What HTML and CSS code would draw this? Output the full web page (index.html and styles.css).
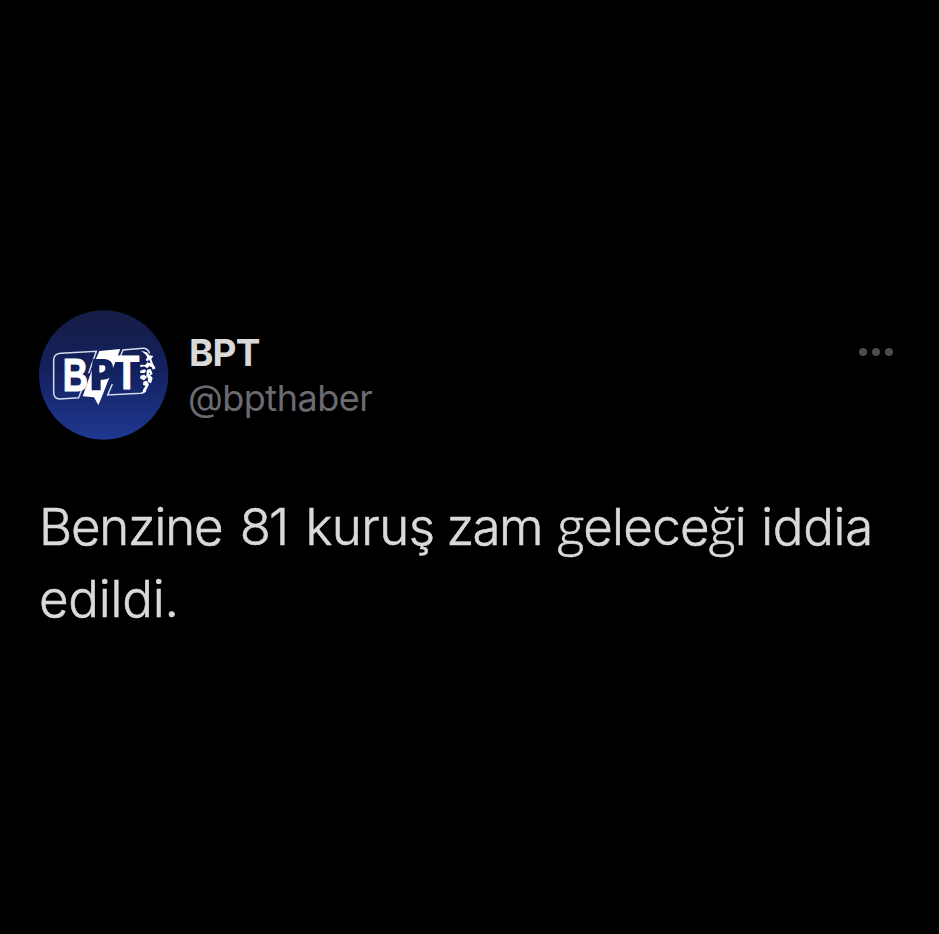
FILE: index.html
```html
<!DOCTYPE html>
<html lang="tr">
<head>
<meta charset="utf-8">
<title>BPT</title>
<link rel="stylesheet" href="styles.css">
</head>
<body>
<article class="post">
  <header class="head">
    <svg class="avatar" viewBox="0 0 420 420" aria-hidden="true">
      <defs><linearGradient id="sky" x1="0" y1="0" x2="0" y2="1"><stop offset="0" stop-color="#171d45"/><stop offset=".45" stop-color="#12205e"/><stop offset="1" stop-color="#1f3890"/></linearGradient></defs>
      <circle cx="209" cy="210" r="194" fill="url(#sky)"/>
      <g fill="none" stroke="#d5daec" stroke-width="4.5">
        <path d="M164 205L187 139L80 145Q59 147 59 166V262Q59 282 78 282L134 278L144 252"/>
        <path d="M257 160L267 135L327 130Q340 129 347 145M235 237L221 270L320 265Q332 264 336 256"/>
      </g>
      <path fill="#fff" d="M196 138L259 132L205 272L193 300L180 277L146 274L184 166Z"/>
      <path fill="#12215f" d="M176 162H211Q237 163 237 191Q236 223 207 224H200V256H173V200Z"/>
      <path fill="#fff" d="M196 181H208Q217 183 213 195Q209 203 196 203Z"/>
      <g class="mark"><text class="b" x="86" y="258" textLength="76" lengthAdjust="spacingAndGlyphs">B</text><text class="t" x="241" y="251" textLength="75" lengthAdjust="spacingAndGlyphs">T</text></g>
      <path fill="#fff" d="M321 137L338 142L346 151L358 153L352 162L357 176L365 190L356 194L354 187L346 184L340 190L330 184L319 187L319 179L333 180L341 172L335 164L340 157L334 148ZM319 197L331 193L338 199L330 205L318 203ZM339 194L350 192L356 207L349 211L356 220L351 235L341 231L342 220L337 213ZM319 212L331 209L339 217L330 226L319 221ZM328 230L337 227L345 238L340 249L334 259L325 264L328 252L335 243L327 239Z"/>
      <path d="M339 167L347 166L350 173L342 173ZM346 203L350 207L344 208Z" fill="#12215f"/>
    </svg>
    <div class="who">
      <div class="name">BPT</div>
      <div class="handle">@bpthaber</div>
    </div>
    <div class="more"><i></i><i></i><i></i></div>
  </header>
  <p class="text"><span class="w1">Benzine</span> <span class="w2">81</span> <span class="w3">kuruş</span> <span class="w4">zam</span> <span class="w5"><span class="g">g</span>elece<span class="g">ğ</span>i</span> <span class="w6">iddia</span><br><span class="last">edildi.</span></p>
</article>
</body>
</html>
```
FILE: styles.css
```css
body {
  margin: 0;
  height: 934px;
  box-sizing: border-box;
  background: #000;
  border-right: 1px solid #d9d9d9;
  font-family: Inter, "Liberation Sans", sans-serif;
  overflow: hidden;
}
.post { padding: 305px 45px 0 34px; }
.head { display: flex; height: 140px; }
.avatar { width: 140px; height: 140px; }
.mark { font-family: "Liberation Sans", sans-serif; font-weight: 700; fill: #fff; stroke: #fff; stroke-width: 3; }
.b { font-size: 136px; }
.t { font-size: 142px; }
.who { padding: 24px 0 0 15px; }
.name {
  font-size: 37px;
  line-height: 47px;
  font-weight: 700;
  letter-spacing: -.9px;
  color: #d9d9d9;
}
.handle {
  margin: -1px 0 0 -1px;
  font-size: 36px;
  line-height: 46px;
  color: #6b6a70;
  letter-spacing: -.5px;
}
.more { display: flex; gap: 5px; margin: 43px 1px 0 auto; }
.more i { width: 8px; height: 8px; border-radius: 50%; background: #4c4b4f; }
.text {
  margin: 46px -40px 0 5px;
  font-size: 51px;
  line-height: 72px;
  font-weight: 300;
  color: #d9d9d9;
  -webkit-text-stroke: .6px #d9d9d9;
  white-space: nowrap;
}
.w1 { letter-spacing: -1.2px; margin-right: 3px; }
.w2 { letter-spacing: -2px; margin-right: 4px; }
.w3 { letter-spacing: -.5px; margin-right: -2.5px; }
.w4 { letter-spacing: -1.5px; margin-right: 1px; }
.w5 { letter-spacing: -.7px; margin-right: 1px; }
.w6 { letter-spacing: -.3px; }
.last { letter-spacing: -.2px; }
.g { font-family: "Open Sans", sans-serif; font-weight: 300; line-height: 1; }
```
